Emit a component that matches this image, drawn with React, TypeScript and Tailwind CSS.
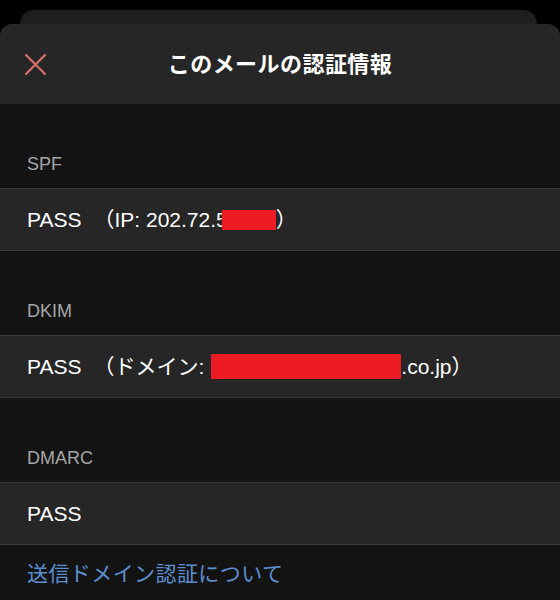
const font = { fontFamily: '"Liberation Sans", "Noto Sans CJK JP", sans-serif' };

function Redacted({ className }: { className: string }) {
  return <span className={`inline-block bg-[#ed1c24] align-middle ${className}`} />;
}

function Section({ label, children }: { label: string; children: React.ReactNode }) {
  return (
    <section>
      <div className="flex h-[84px] items-end px-[27px] pb-[13px] text-[18px] leading-[22px] text-[#a6a6a6]">
        {label}
      </div>
      <div className="flex h-[63px] items-center whitespace-nowrap border-y border-[#393939] bg-[#262626] px-[27px] text-[21px] text-white">
        {children}
      </div>
    </section>
  );
}

export default function App() {
  return (
    <div className="flex h-[600px] flex-col overflow-hidden bg-black pt-[10px]" style={font}>
      <div className="ml-[20px] mr-[23px] h-[14px] shrink-0 rounded-t-[14px] bg-[#1f1f1f]" />
      <div className="flex-1 overflow-hidden rounded-t-[12px] bg-[#131313]">
        <header className="grid h-[80px] grid-cols-[70px_1fr_70px] items-center bg-[#262626]">
          <button className="flex h-full items-center pl-[24px]">
            <svg width="23" height="23" viewBox="0 0 23 23" fill="none" stroke="#d8706e" strokeWidth="2.2" strokeLinecap="round">
              <path d="M2 2L21 21M21 2L2 21" />
            </svg>
          </button>
          <h1 className="text-center text-[22px] font-bold tracking-[0.02em] text-white">このメールの認証情報</h1>
          <div />
        </header>

        <Section label="SPF">
          <span>PASS</span>
          <span className="ml-[12px]">（IP: 202.72.5</span>
          <Redacted className="-ml-[6px] h-[20px] w-[54px]" />
          <span>）</span>
        </Section>

        <Section label="DKIM">
          <span>PASS</span>
          <span className="ml-[12px]">（ドメイン:</span>
          <Redacted className="ml-[7px] h-[25px] w-[190px]" />
          <span>.co.jp）</span>
        </Section>

        <Section label="DMARC">
          <span>PASS</span>
        </Section>

        <a className="block px-[27px] pt-[15px] text-[21px] leading-[28px] tracking-[0.02em] text-[#5d8fd0]">送信ドメイン認証について</a>
      </div>
    </div>
  );
}
